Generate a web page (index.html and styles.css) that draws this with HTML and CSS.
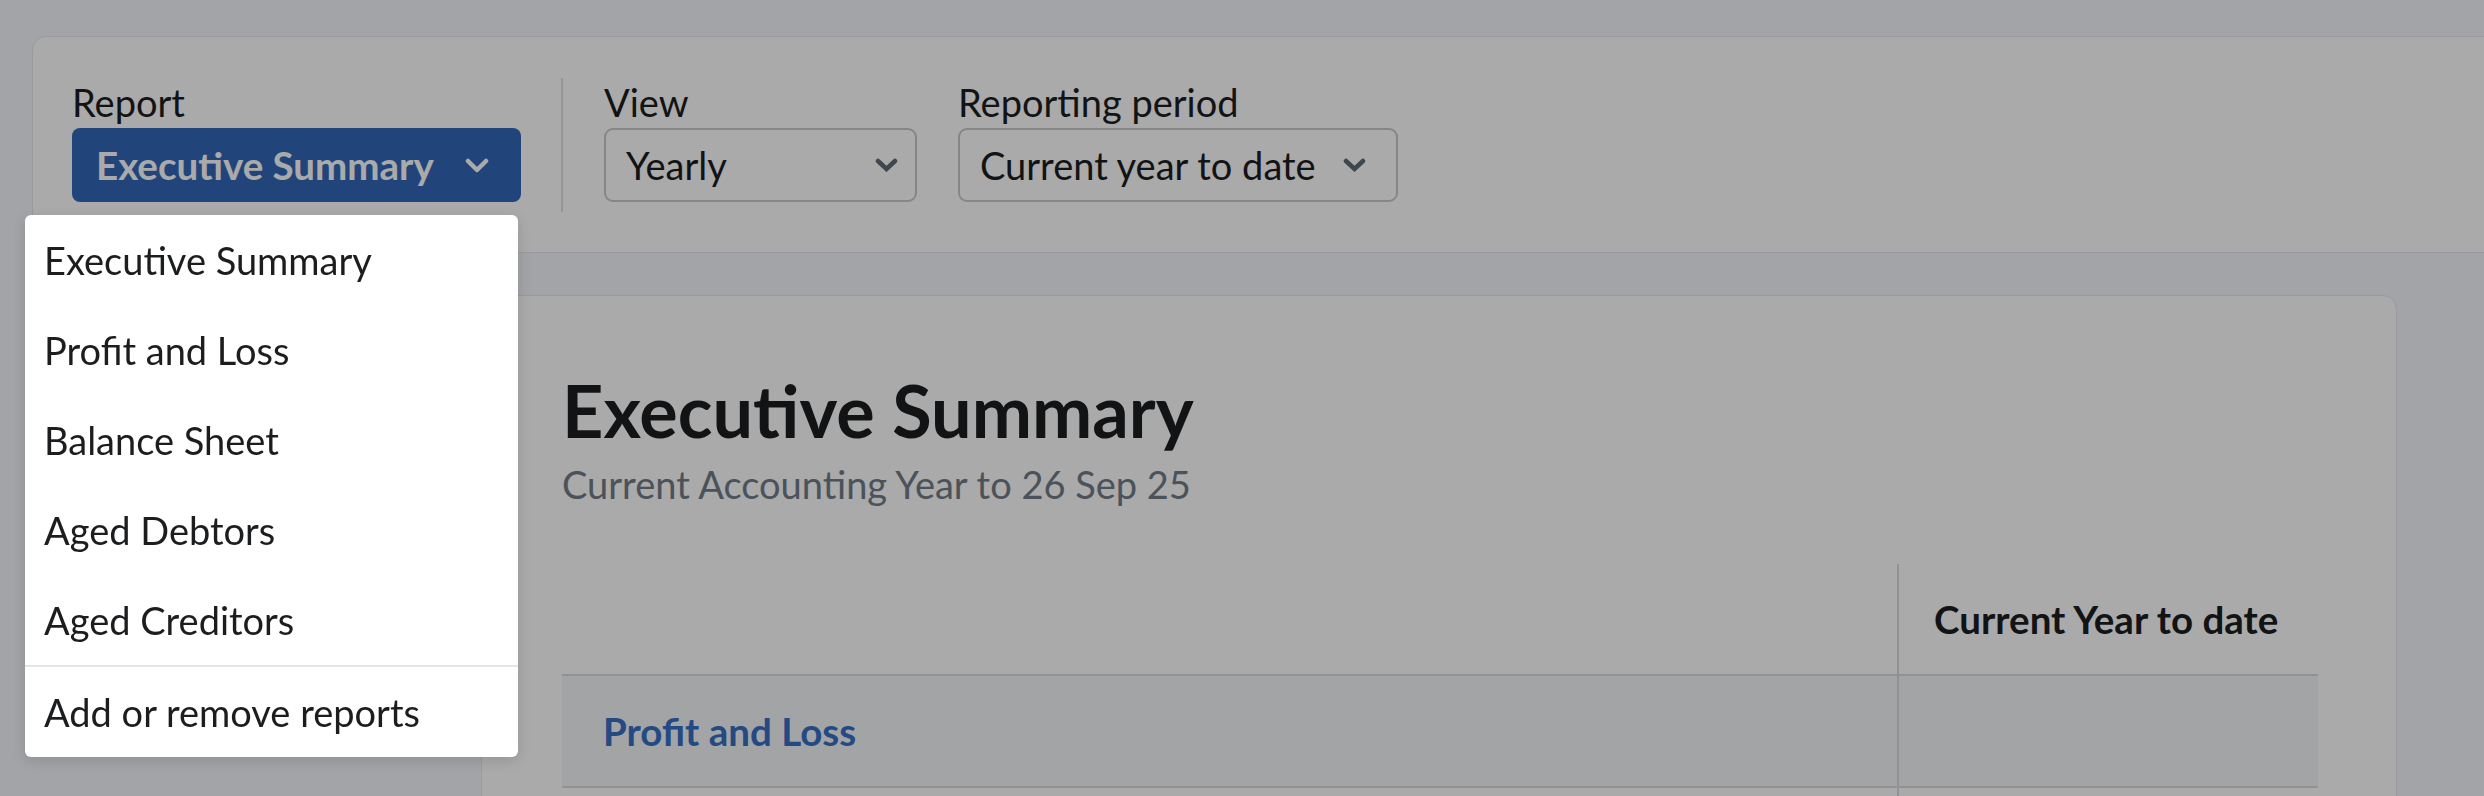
FILE: index.html
```html
<!DOCTYPE html>
<html lang="en">
<head>
<meta charset="utf-8">
<title>Executive Summary</title>
<link rel="stylesheet" href="styles.css">
</head>
<body>
<div class="page">
  <section class="filters">
    <div class="field">
      <span class="field-label">Report</span>
      <button class="report-btn" type="button">
        <span>Executive Summary</span>
        <svg class="chev-btn" viewBox="0 0 24 15" aria-hidden="true"><polyline points="3,3 12,12 21,3"/></svg>
      </button>
    </div>
    <div class="divider"></div>
    <div class="field">
      <span class="field-label">View</span>
      <div class="select select-view">
        <span>Yearly</span>
        <svg class="chev-sel" viewBox="0 0 23 14" aria-hidden="true"><polyline points="3,3 11.5,11 20,3"/></svg>
      </div>
    </div>
    <div class="field field-period">
      <span class="field-label">Reporting period</span>
      <div class="select select-period">
        <span>Current year to date</span>
        <svg class="chev-sel" viewBox="0 0 23 14" aria-hidden="true"><polyline points="3,3 11.5,11 20,3"/></svg>
      </div>
    </div>
  </section>

  <main class="card">
    <h1 class="title">Executive Summary</h1>
    <p class="subtitle">Current Accounting Year to 26 Sep 25</p>
    <table class="summary">
      <thead>
        <tr>
          <th class="col-name"></th>
          <th class="col-value">Current Year to date</th>
        </tr>
      </thead>
      <tbody>
        <tr class="row-section">
          <td class="col-name"><a class="section-link" href="#">Profit and Loss</a></td>
          <td class="col-value"></td>
        </tr>
        <tr>
          <td class="col-name"></td>
          <td class="col-value"></td>
        </tr>
      </tbody>
    </table>
  </main>
</div>

<div class="overlay"></div>

<ul class="menu">
  <li class="menu-item">Executive Summary</li>
  <li class="menu-item">Profit and Loss</li>
  <li class="menu-item">Balance Sheet</li>
  <li class="menu-item">Aged Debtors</li>
  <li class="menu-item">Aged Creditors</li>
  <li class="menu-item menu-item-footer">Add or remove reports</li>
</ul>
</body>
</html>
```

FILE: styles.css
```css
* { box-sizing: border-box; }

html, body {
  margin: 0;
  padding: 0;
  height: 100%;
  overflow: hidden;
}

body {
  background: #f3f6fb;
  font-family: Lato, "Liberation Sans", sans-serif;
  color: #1c1d1f;
  font-size: 38px;
}

.page {
  padding-top: 36px;
}

/* ---------- filter bar ---------- */
.filters {
  display: flex;
  align-items: flex-start;
  margin-left: 32px;
  margin-right: -40px;
  background: #ffffff;
  border: 1px solid #e4e7ec;
  border-radius: 14px 0 0 14px;
  padding: 44px 0 50px 39px;
}

.field {
  display: flex;
  flex-direction: column;
  gap: 4px;
}

.field-label {
  font-size: 38px;
  line-height: 43px;
  color: #1c1d1f;
}

.report-btn {
  display: flex;
  align-items: center;
  justify-content: space-between;
  width: 449px;
  height: 74px;
  padding: 0 32px 0 24px;
  border: none;
  border-radius: 8px;
  background: #3268b9;
  color: #ffffff;
  font-family: inherit;
  font-size: 38.5px;
  font-weight: 700;
}

.chev-btn {
  width: 24px;
  height: 15px;
  fill: none;
  stroke: #ffffff;
  stroke-width: 4.5;
  stroke-linecap: round;
  stroke-linejoin: round;
}

.divider {
  align-self: stretch;
  width: 2px;
  margin: -3px 0 -10px 40px;
  background: #dfe2e7;
}

.field + .field,
.divider + .field {
  margin-left: 41px;
}

.field-period {
  margin-left: 43px;
}

.select {
  display: flex;
  align-items: center;
  justify-content: space-between;
  height: 74px;
  border: 2px solid #c6cad0;
  border-radius: 9px;
  background: #ffffff;
  font-size: 38px;
  color: #1c1d1f;
}

.select-view {
  width: 313px;
  padding: 0 17px 0 20px;
}

.select-period {
  width: 440px;
  padding: 0 30px 0 20px;
}

.chev-sel {
  width: 23px;
  height: 14px;
  fill: none;
  stroke: #5f6a76;
  stroke-width: 4.5;
  stroke-linecap: round;
  stroke-linejoin: miter;
}

/* ---------- report card ---------- */
.card {
  margin: 42px 0 0 481px;
  width: 1916px;
  min-height: 800px;
  background: #ffffff;
  border: 1px solid #e4e7ec;
  border-radius: 14px;
  padding: 72px 78px 0 80px;
}

.title {
  margin: 0;
  font-size: 72px;
  line-height: 84px;
  font-weight: 700;
  color: #1c1d1f;
}

.subtitle {
  margin: 11px 0 0;
  font-size: 38px;
  line-height: 43px;
  color: #717c88;
}

.summary {
  margin-top: 58px;
  width: 100%;
  border-collapse: collapse;
}

.summary th,
.summary td {
  padding: 0;
  text-align: left;
  border-bottom: 2px solid #d8dbe0;
}

.summary thead th {
  height: 111px;
  font-size: 38.5px;
  font-weight: 700;
  color: #1c1d1f;
}

.summary tbody td {
  height: 112px;
}

.summary .col-name {
  padding-left: 41px;
}

.summary .col-value {
  width: 420px;
  padding-left: 35px;
  border-left: 2px solid #d8dbe0;
}

.row-section td {
  background: #f5f6f9;
}

.section-link {
  font-size: 38.5px;
  font-weight: 700;
  color: #3670c6;
  text-decoration: none;
}

/* ---------- overlay + menu ---------- */
.overlay {
  position: fixed;
  inset: 0;
  background: rgba(0, 0, 0, 0.333);
  z-index: 10;
}

.menu {
  position: absolute;
  left: 25px;
  top: 215px;
  width: 493px;
  margin: 0;
  padding: 0;
  list-style: none;
  background: #ffffff;
  border-radius: 6px;
  box-shadow: 0 4px 14px rgba(0, 0, 0, 0.12);
  z-index: 20;
}

.menu-item {
  display: flex;
  align-items: center;
  height: 90px;
  padding-left: 19px;
  font-size: 38px;
  color: #1c1d1f;
}

.menu-item-footer {
  height: 92px;
  border-top: 2px solid #e3e5ea;
}
```
